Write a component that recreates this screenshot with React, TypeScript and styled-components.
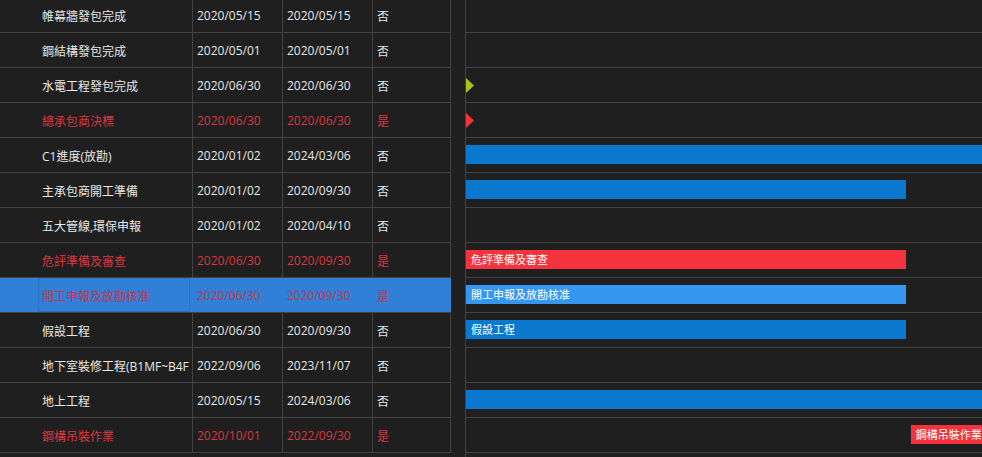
import React from "react";
import styled, { createGlobalStyle, css } from "styled-components";

interface Task {
  name: string;
  start: string;
  end: string;
  critical: boolean;
  summary?: boolean;
}

const tasks: Task[] = [
  { name: "帷幕牆發包完成", start: "2020/05/15", end: "2020/05/15", critical: false },
  { name: "鋼結構發包完成", start: "2020/05/01", end: "2020/05/01", critical: false },
  { name: "水電工程發包完成", start: "2020/06/30", end: "2020/06/30", critical: false },
  { name: "總承包商決標", start: "2020/06/30", end: "2020/06/30", critical: true },
  { name: "C1進度(放勘)", start: "2020/01/02", end: "2024/03/06", critical: false, summary: true },
  { name: "主承包商開工準備", start: "2020/01/02", end: "2020/09/30", critical: false, summary: true },
  { name: "五大管線,環保申報", start: "2020/01/02", end: "2020/04/10", critical: false },
  { name: "危評準備及審查", start: "2020/06/30", end: "2020/09/30", critical: true },
  { name: "開工申報及放勘核准", start: "2020/06/30", end: "2020/09/30", critical: true },
  { name: "假設工程", start: "2020/06/30", end: "2020/09/30", critical: false },
  { name: "地下室裝修工程(B1MF~B4F", start: "2022/09/06", end: "2023/11/07", critical: false },
  { name: "地上工程", start: "2020/05/15", end: "2024/03/06", critical: false, summary: true },
  { name: "鋼構吊裝作業", start: "2020/10/01", end: "2022/09/30", critical: true },
];

const SELECTED = 8;
const SCROLL_TOP = 2;

// timeline is scrolled so that 2020/06/30 sits on the left edge
const VIEW_START = Date.UTC(2020, 5, 30);
const DAY = 86400000;
const PX_PER_DAY = 440 / 92;

const toX = (d: string) => {
  const [y, m, day] = d.split("/").map(Number);
  return ((Date.UTC(y, m - 1, day) - VIEW_START) / DAY) * PX_PER_DAY;
};

const GlobalStyle = createGlobalStyle`
  html, body {
    margin: 0;
    padding: 0;
    background: #1f1f1f;
  }
  body {
    font-family: "Open Sans", "Noto Sans CJK TC", sans-serif;
    -webkit-font-smoothing: antialiased;
  }
`;

const Layout = styled.div`
  display: flex;
  width: 982px;
  height: 457px;
  overflow: hidden;
  background: #1f1f1f;
`;

const GridPane = styled.div`
  flex: none;
  width: 451px;
  overflow: hidden;
`;

const Splitter = styled.div`
  flex: none;
  width: 14px;
  background: #1f1f1f;
`;

const GanttPane = styled.div`
  flex: 1;
  min-width: 0;
  overflow: hidden;
  border-left: 1px solid #424242;
`;

const Rows = styled.div`
  margin-top: -${SCROLL_TOP}px;
`;

const Cell = styled.div`
  display: flex;
  align-items: center;
  box-sizing: border-box;
  padding: 1px 0 0 4px;
  border-right: 1px solid #424242;
  white-space: nowrap;
  overflow: hidden;
`;

const NameCell = styled(Cell)`
  align-items: stretch;
  padding: 0 2px 0 38px;
`;

const NameText = styled.div<{ $focused: boolean }>`
  flex: 1;
  display: flex;
  align-items: center;
  padding: 1px 0 0 3px;
  border: 1px solid ${({ $focused }) => ($focused ? "#2a70bf" : "transparent")};
  overflow: hidden;
  white-space: nowrap;
`;

const GridRow = styled.div<{ $selected: boolean; $critical: boolean }>`
  display: grid;
  grid-template-columns: 193px 90px 90px 78px;
  height: 35px;
  box-sizing: border-box;
  border-bottom: 1px solid #424242;
  font-size: 12px;
  color: ${({ $critical }) => ($critical ? "#dc3640" : "#e8e8e8")};
  ${({ $selected }) =>
    $selected &&
    css`
      background: #2f80d6;
      color: #c4374e;
      ${Cell} {
        border-right-color: transparent;
      }
    `}
`;

const GanttRow = styled.div`
  position: relative;
  height: 35px;
  box-sizing: border-box;
  border-bottom: 1px solid #424242;
`;

const Bar = styled.div<{ $tone: "blue" | "red" | "active" }>`
  position: absolute;
  top: 7px;
  height: 19px;
  box-sizing: border-box;
  padding-left: 5px;
  font-size: 11px;
  line-height: 19px;
  color: #ffffff;
  white-space: nowrap;
  overflow: hidden;
  background: ${({ $tone }) =>
    $tone === "red" ? "#f5333d" : $tone === "active" ? "#3597ef" : "#0a78cf"};
`;

const Milestone = styled.svg`
  position: absolute;
  top: 10px;
`;

const GanttBar = ({ task, selected }: { task: Task; selected: boolean }) => {
  const left = toX(task.start);
  if (task.start === task.end) {
    return (
      <Milestone width="16" height="15" viewBox="0 0 16 15" style={{ left: left - 8 }}>
        <polygon points="8,0 16,7.5 8,15 0,7.5" fill={task.critical ? "#f0363c" : "#a6c41f"} />
      </Milestone>
    );
  }
  const right = toX(task.end);
  const tone = selected ? "active" : task.critical ? "red" : "blue";
  return (
    <Bar $tone={tone} style={{ left, width: right - left }}>
      {task.summary ? null : task.name}
    </Bar>
  );
};

export default function App() {
  return (
    <>
      <GlobalStyle />
      <Layout>
        <GridPane>
          <Rows>
            {tasks.map((t, i) => (
              <GridRow key={t.name} $selected={i === SELECTED} $critical={t.critical}>
                <NameCell>
                  <NameText $focused={i === SELECTED}>{t.name}</NameText>
                </NameCell>
                <Cell>{t.start}</Cell>
                <Cell>{t.end}</Cell>
                <Cell>{t.critical ? "是" : "否"}</Cell>
              </GridRow>
            ))}
          </Rows>
        </GridPane>
        <Splitter />
        <GanttPane>
          <Rows>
            {tasks.map((t, i) => (
              <GanttRow key={t.name}>
                <GanttBar task={t} selected={i === SELECTED} />
              </GanttRow>
            ))}
          </Rows>
        </GanttPane>
      </Layout>
    </>
  );
}
